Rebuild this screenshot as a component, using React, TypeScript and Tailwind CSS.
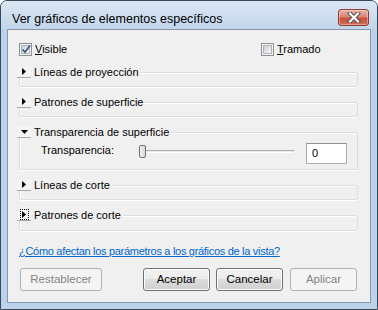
import type { ReactNode } from "react";

type GroupProps = {
  label: string;
  open?: boolean;
  focused?: boolean;
  bodyClass?: string;
  children?: ReactNode;
};

function Arrow({ open }: { open?: boolean }) {
  return open ? (
    <svg width="7" height="4" viewBox="0 0 7 4">
      <path d="M0 0h7L3.5 4z" fill="#000" />
    </svg>
  ) : (
    <svg width="4" height="7" viewBox="0 0 4 7">
      <path d="M0 0v7l4-3.5z" fill="#000" />
    </svg>
  );
}

function Toggle({ open, focused }: { open?: boolean; focused?: boolean }) {
  return (
    <div className="flex h-[12px] w-[14px] shrink-0 items-center justify-center border-b border-[#a7a7a7] bg-[#f4f4f4]">
      {focused ? (
        <div className="flex h-[11px] w-[9px] items-center justify-center border border-dotted border-black">
          <Arrow open={open} />
        </div>
      ) : (
        <Arrow open={open} />
      )}
    </div>
  );
}

function Group({ label, open, focused, bodyClass = "h-[9px]", children }: GroupProps) {
  return (
    <div className="flex flex-col">
      <div className="flex h-[12px]">
        <Toggle open={open} focused={focused} />
        <span className="pl-[3px] pr-[2px] text-[11px] leading-[12px] text-black">{label}</span>
        <div className="h-[6px] flex-1 self-end rounded-tr-[3px] border-t border-r border-[#d5dfe5] shadow-[inset_0_1px_0_#fff]" />
      </div>
      <div
        className={
          "ml-[2px] rounded-b-[3px] border-x border-b border-[#d5dfe5] shadow-[inset_1px_0_0_#fff,0_1px_0_#fff] " +
          bodyClass
        }
      >
        {children}
      </div>
    </div>
  );
}

function Checkbox({ checked }: { checked?: boolean }) {
  return (
    <div className="flex h-[13px] w-[13px] shrink-0 items-center justify-center border border-[#8e8f8f] bg-[#f4f4f4]">
      <div className="relative h-[9px] w-[9px] border border-[#aeb3b9] bg-gradient-to-br from-[#cbcfd5] to-[#f7f7f7]">
        {checked && (
          <svg className="absolute -left-[2px] -top-[3px]" width="12" height="12" viewBox="0 0 12 12">
            <path d="M2.5 6.5L5 9.2L10 2.5" fill="none" stroke="#3c5a8e" strokeWidth="1.8" />
          </svg>
        )}
      </div>
    </div>
  );
}

function Button({ label, disabled, className = "" }: { label: string; disabled?: boolean; className?: string }) {
  return (
    <div
      className={
        "flex h-[23px] items-center justify-center rounded-[3px] border text-[11.5px] " +
        (disabled
          ? "border-[#adb2b5] bg-[#f4f4f4] text-[#838383]"
          : "border-[#707070] bg-[linear-gradient(180deg,#f2f2f2_0%,#ebebeb_50%,#dddddd_50%,#cfcfcf_100%)] text-black shadow-[inset_0_0_0_1px_#fcfcfc]") +
        " " +
        className
      }
    >
      {label}
    </div>
  );
}

function CloseButton() {
  return (
    <div className="flex h-[17px] w-[31px] items-center justify-center rounded-[3px] border border-[#8d3a2f] bg-[linear-gradient(180deg,#eab1a5_0%,#d98673_45%,#c8513c_55%,#cf6d5c_100%)] shadow-[inset_0_0_0_1px_rgba(255,255,255,0.35)]">
      <svg width="14" height="11" viewBox="0 0 14 11">
        <path d="M3 1.5L11 9.5M11 1.5L3 9.5" stroke="#4a4a4a" strokeWidth="4" strokeLinecap="square" />
        <path d="M3 1.5L11 9.5M11 1.5L3 9.5" stroke="#fff" strokeWidth="2.2" strokeLinecap="square" />
      </svg>
    </div>
  );
}

export default function App() {
  return (
    <div className="flex h-[310px] w-[378px] flex-col rounded-t-[7px] border border-[#3a4756] bg-[#bcd2ea] font-['Liberation_Sans',Arial,sans-serif]">
      <div className="flex h-[28px] items-start rounded-t-[6px] bg-gradient-to-b from-[#dbe7f4] to-[#c2d6ec] pl-[11px] pr-[8px]">
        <span className="mt-[11px] flex-1 text-[12.5px] leading-[14px] text-black">
          Ver gráficos de elementos específicos
        </span>
        <div className="mt-[8px]">
          <CloseButton />
        </div>
      </div>
      <div className="mx-[6px] mb-[6px] flex flex-1 flex-col border border-[#8598ad] bg-[#f0f0f0]">
        <div className="mt-[13px] flex h-[13px] items-center pl-[11px] text-[11px] text-black">
          <div className="flex w-[242px] items-center">
            <Checkbox checked />
            <span className="pl-[3px] leading-[13px]">
              <span className="underline">V</span>isible
            </span>
          </div>
          <div className="flex items-center">
            <Checkbox />
            <span className="pl-[3px] leading-[13px]">
              <span className="underline">T</span>ramado
            </span>
          </div>
        </div>

        <div className="mt-[10px] flex flex-col gap-[9px] pl-[9px] pr-[12px]">
          <Group label="Líneas de proyección" />
          <Group label="Patrones de superficie" />
          <Group label="Transparencia de superficie" open bodyClass="h-[32px]">
            <div className="flex items-start pl-[21px] pt-[5px]">
              <span className="mt-[1px] w-[98px] text-[11px] leading-[13px] text-black">Transparencia:</span>
              <div className="mt-[2px] flex h-[13px] w-[155px] items-center">
                <div className="h-[13px] w-[7px] shrink-0 rounded-[2px] border border-[#707070] bg-gradient-to-r from-[#f3f3f3] to-[#d6d6d6]" />
                <div className="h-[3px] flex-1 border-t border-[#b0b0b0] border-b border-b-white bg-[#e7eaea]" />
              </div>
              <div className="ml-[12px] flex h-[21px] w-[41px] items-center border border-[#abadb3] border-t-[#8f9296] bg-white pl-[5px] text-[11px] text-black">
                0
              </div>
            </div>
          </Group>
          <Group label="Líneas de corte" />
          <Group label="Patrones de corte" focused bodyClass="h-[10px]" />
        </div>

        <div className="mt-[14px] pl-[11px] text-[11px] leading-[13px] tracking-[-0.3px] text-[#0066cc] underline">
          ¿Cómo afectan los parámetros a los gráficos de la vista?
        </div>

        <div className="mt-[10px] flex pl-[12px]">
          <Button label="Restablecer" disabled className="w-[82px]" />
          <Button label="Aceptar" className="ml-[41px] w-[67px]" />
          <Button label="Cancelar" className="ml-[6px] w-[67px]" />
          <Button label="Aplicar" disabled className="ml-[7px] w-[67px]" />
        </div>
      </div>
    </div>
  );
}
